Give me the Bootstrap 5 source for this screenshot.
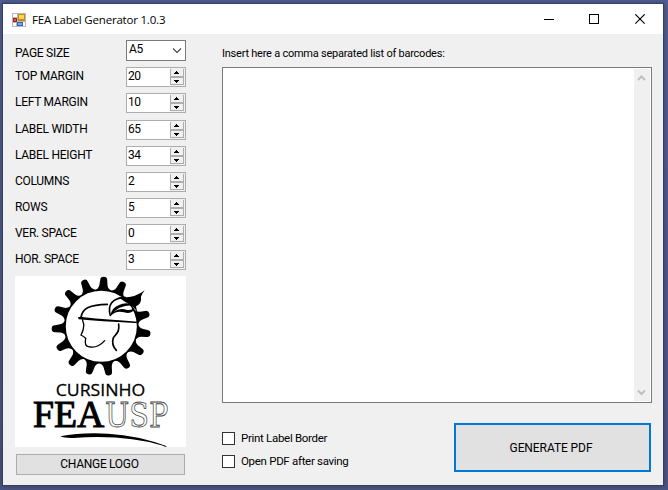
<!DOCTYPE html>
<html lang="en">
<head>
<meta charset="utf-8">
<title>FEA Label Generator 1.0.3</title>
<link href="https://cdn.jsdelivr.net/npm/bootstrap@5.3.0/dist/css/bootstrap.min.css" rel="stylesheet">
<style>
body{width:668px;height:490px;overflow:hidden;background:linear-gradient(#515f92,#4c5580);font:12px/16px Roboto,"Liberation Sans",sans-serif;color:#000;padding:3px 4px 4px 2px}
.win{height:483px;border:1px solid #35405c;background:#f0f0f0;box-shadow:0 0 5px #1b233f80}
.titlebar{height:30px;background:#fff;padding:1px 0 0 9px}
.titlebar span{font:11.5px/16px "Open Sans","Noto Sans",sans-serif;letter-spacing:-.2px;margin-left:6px}
.left{width:171px;margin:6px 0 0 12px}
.field{height:20px;margin-bottom:6px}
.field label{position:relative;top:-1px;letter-spacing:-.28px;white-space:nowrap}
.box{width:60px;height:20px;border:1px solid #abadb3;background:#fff;padding-left:1px;line-height:17px;letter-spacing:-.4px}
.combo{height:21px;border-color:#7a7a7a;padding-left:2px}
.first{height:21px}
.first label{top:5px}
.gap7{margin-bottom:7px}
.logo{display:block;width:171px;height:171px;background:#fff}
.wbtn{border:1px solid #adadad;background:#e1e1e1;border-radius:0;padding:0;font-size:12px;line-height:19px;color:#000;letter-spacing:-.3px}
.change{width:169px;height:21px;margin:7px 0 0 1px;padding-right:2px}
.right{width:430px;margin:11px 0 0 36px}
.prompt{font-size:11px;line-height:18px;margin-bottom:4px;white-space:nowrap;letter-spacing:-.235px}
.area{height:336px;border:1px solid #7a7a7a;background:#fff;padding:1px}
.bar{width:16px;background:#f0f0f0;padding:6px 4px 5px 3px}
.actions{height:49px;margin-top:20px}
.checks{padding-top:7px;font-size:11.5px;line-height:17px;white-space:nowrap;letter-spacing:-.3px}
.tick{height:16px;margin-bottom:7px}
.tick i{width:13px;height:13px;border:1px solid #333;background:#fff;margin-right:6px}
.gen{width:197px;height:49px;border:2px solid #0078d7;margin-right:1px;padding:2px 3px 0 0;letter-spacing:-.08px}
</style>
<script src="https://cdn.jsdelivr.net/npm/bootstrap@5.3.0/dist/js/bootstrap.bundle.min.js"></script>
</head>
<body>
<svg class="d-none">
  <symbol id="spin" viewBox="0 0 15 18"><path fill="#f0f0f0" d="M0 0h15v18H0z"/><path fill="#adadad" d="M0 1h1v16H0zM13 1h1v16H13zM0 8h14v2H0zM0 16h14v1H0z"/><path shape-rendering="crispEdges" d="M6 3h1v1h1v1h1v1h-5v-1h1v-1h1zM4 12h5v1h-1v1h-1v1h-1v-1h-1v-1h-1z"/></symbol>
</svg>
<div class="win">
  <div class="titlebar d-flex align-items-center">
    <svg width="14" height="14" viewBox="0 0 14 14" shape-rendering="crispEdges"><path fill="#b8b8b8" d="M0 0h14v14H0z"/><path fill="#fff" d="M1 1h4v3H1zM1 10h3v3H1zM11 9h2v4h-2z"/><path fill="#a51e17" d="M1 5h4v4H1z"/><path fill="#dc5b4d" d="M2 6h2v2H2z"/><path fill="#c88d08" d="M6 1h7v7H6z"/><path fill="#ffd657" d="M7 2h5v4H7z"/><path fill="#2f65bd" d="M5 9h6v4H5z"/><path fill="#71a8ef" d="M6 10h4v2H6z"/></svg>
    <span>FEA Label Generator 1.0.3</span>
    <svg class="ms-auto" width="119" height="12" viewBox="0 0 119 12" shape-rendering="crispEdges"><path d="M0 5h10v1H0z"/><path fill="none" stroke="#000" d="M45.500.500h9v9h-9z"/><path shape-rendering="auto" fill="none" stroke="#000" stroke-width="1.100" d="M91.300.300l9.400 9.400M100.700.300l-9.400 9.400"/></svg>
  </div>
  <div class="d-flex">
    <div class="left">
      <div id="fields">
        <div class="field first d-flex justify-content-between"><label>PAGE SIZE</label><div class="box combo d-flex justify-content-between">A5<svg width="14" height="19" viewBox="0 0 14 19"><path fill="none" stroke="#444" stroke-width="1.100" d="M2 7.500l4 4 4-4"/></svg></div></div>
        <div class="field d-flex justify-content-between align-items-center"><label>TOP MARGIN</label><div class="box d-flex justify-content-between">20<svg width="15" height="18"><use href="#spin"/></svg></div></div>
        <div class="field gap7 d-flex justify-content-between align-items-center"><label>LEFT MARGIN</label><div class="box d-flex justify-content-between">10<svg width="15" height="18"><use href="#spin"/></svg></div></div>
        <div class="field d-flex justify-content-between align-items-center"><label>LABEL WIDTH</label><div class="box d-flex justify-content-between">65<svg width="15" height="18"><use href="#spin"/></svg></div></div>
        <div class="field d-flex justify-content-between align-items-center"><label>LABEL HEIGHT</label><div class="box d-flex justify-content-between">34<svg width="15" height="18"><use href="#spin"/></svg></div></div>
        <div class="field d-flex justify-content-between align-items-center"><label>COLUMNS</label><div class="box d-flex justify-content-between">2<svg width="15" height="18"><use href="#spin"/></svg></div></div>
        <div class="field d-flex justify-content-between align-items-center"><label>ROWS</label><div class="box d-flex justify-content-between">5<svg width="15" height="18"><use href="#spin"/></svg></div></div>
        <div class="field d-flex justify-content-between align-items-center"><label>VER. SPACE</label><div class="box d-flex justify-content-between">0<svg width="15" height="18"><use href="#spin"/></svg></div></div>
        <div class="field d-flex justify-content-between align-items-center"><label>HOR. SPACE</label><div class="box d-flex justify-content-between">3<svg width="15" height="18"><use href="#spin"/></svg></div></div>
      </div>
      <svg class="logo" viewBox="15 276 171 171">
        <defs><path id="tooth" d="M-10-35Q-4.700-37-4.100-41L-3.500-46.200A3.500 3.500 0 0 1 3.500-46.200L4.100-41Q4.700-37 10-35Z"/></defs>
        <g transform="translate(101.300 326.300)">
          <g id="teeth"><use href="#tooth" transform="rotate(3)"/><use href="#tooth" transform="rotate(27)"/><use href="#tooth" transform="rotate(75)"/><use href="#tooth" transform="rotate(99)"/><use href="#tooth" transform="rotate(123)"/><use href="#tooth" transform="rotate(147)"/><use href="#tooth" transform="rotate(171)"/><use href="#tooth" transform="rotate(195)"/><use href="#tooth" transform="rotate(219)"/><use href="#tooth" transform="rotate(243)"/><use href="#tooth" transform="rotate(267)"/><use href="#tooth" transform="rotate(291)"/><use href="#tooth" transform="rotate(315)"/><use href="#tooth" transform="rotate(339)"/></g>
          <circle r="36.300" fill="#fff" stroke="#000" stroke-width="1.500"/>
        </g>
        <g transform="translate(10 272) scale(.33333)" stroke-linecap="round">
          <path d="M325 76Q375 80 404 55Q396 66 393 74Q396 94 378 103L382 122Q372 100 346 90Z"/>
          <path fill="none" stroke="#000" stroke-width="5" d="M213 136C217 108 240 98 292 97M326 156C329 180 320 184 310 197C305 212 309 224 319 235M301 130C292 100 306 78 345 76"/>
          <path fill="none" stroke="#000" stroke-width="4" d="M218 143C217 151 224 155 221 163C221 173 219 179 213 189Q222 194 227 199C225 210 225 222 235 224C254 229 269 223 284 206"/>
          <path d="M204 136Q212 133 222 136Q290 143 383 149Q380 154 374 153Q270 148 206 142ZM301 132Q304 107 327 99Q350 88 372 100Q325 97 301 132ZM301 132Q320 104 351 114Q367 116 374 106Q370 128 342 121Q319 114 301 132Z"/>
        </g>
        <g transform="translate(10 375) scale(.33333)">
          <text x="137" y="63" font-family="Open Sans,sans-serif" font-size="50" textLength="269" lengthAdjust="spacingAndGlyphs" stroke="#000" stroke-width=".8">CURSINHO</text>
          <text x="69" y="156" font-family="'Liberation Serif',serif" font-size="112" textLength="214" lengthAdjust="spacingAndGlyphs" stroke="#000" stroke-width="3">FEA</text>
          <text x="285" y="156" font-family="'DejaVu Serif',serif" font-size="100" textLength="190" lengthAdjust="spacingAndGlyphs" fill="#fff" stroke="#444" stroke-width="2.400">USP</text>
          <path d="M151 184Q210 172 294 176Q386 181 471 214Q465 217 459 212Q344 178 190 189Q164 190 151 184Z"/>
        </g>
      </svg>
      <button class="btn wbtn change d-block">CHANGE LOGO</button>
    </div>
    <div class="right">
      <div class="prompt">Insert here a comma separated list of barcodes:</div>
      <div class="area d-flex justify-content-end"><div class="bar d-flex flex-column justify-content-between">
        <svg width="9" height="7" viewBox="0 0 9 7"><path fill="none" stroke="#bfbfbf" stroke-width="2" d="M1 5l3.500-3.500L8 5"/></svg>
        <svg width="9" height="7" viewBox="0 0 9 7"><path fill="none" stroke="#bfbfbf" stroke-width="2" d="M1 1.500l3.500 3.500L8 1.500"/></svg>
      </div></div>
      <div class="actions d-flex justify-content-between">
        <div class="checks">
          <div class="tick d-flex align-items-center"><i></i>Print Label Border</div>
          <div class="tick d-flex align-items-center"><i></i>Open PDF after saving</div>
        </div>
        <button class="btn wbtn gen">GENERATE PDF</button>
      </div>
    </div>
  </div>
</div>
</body>
</html>
